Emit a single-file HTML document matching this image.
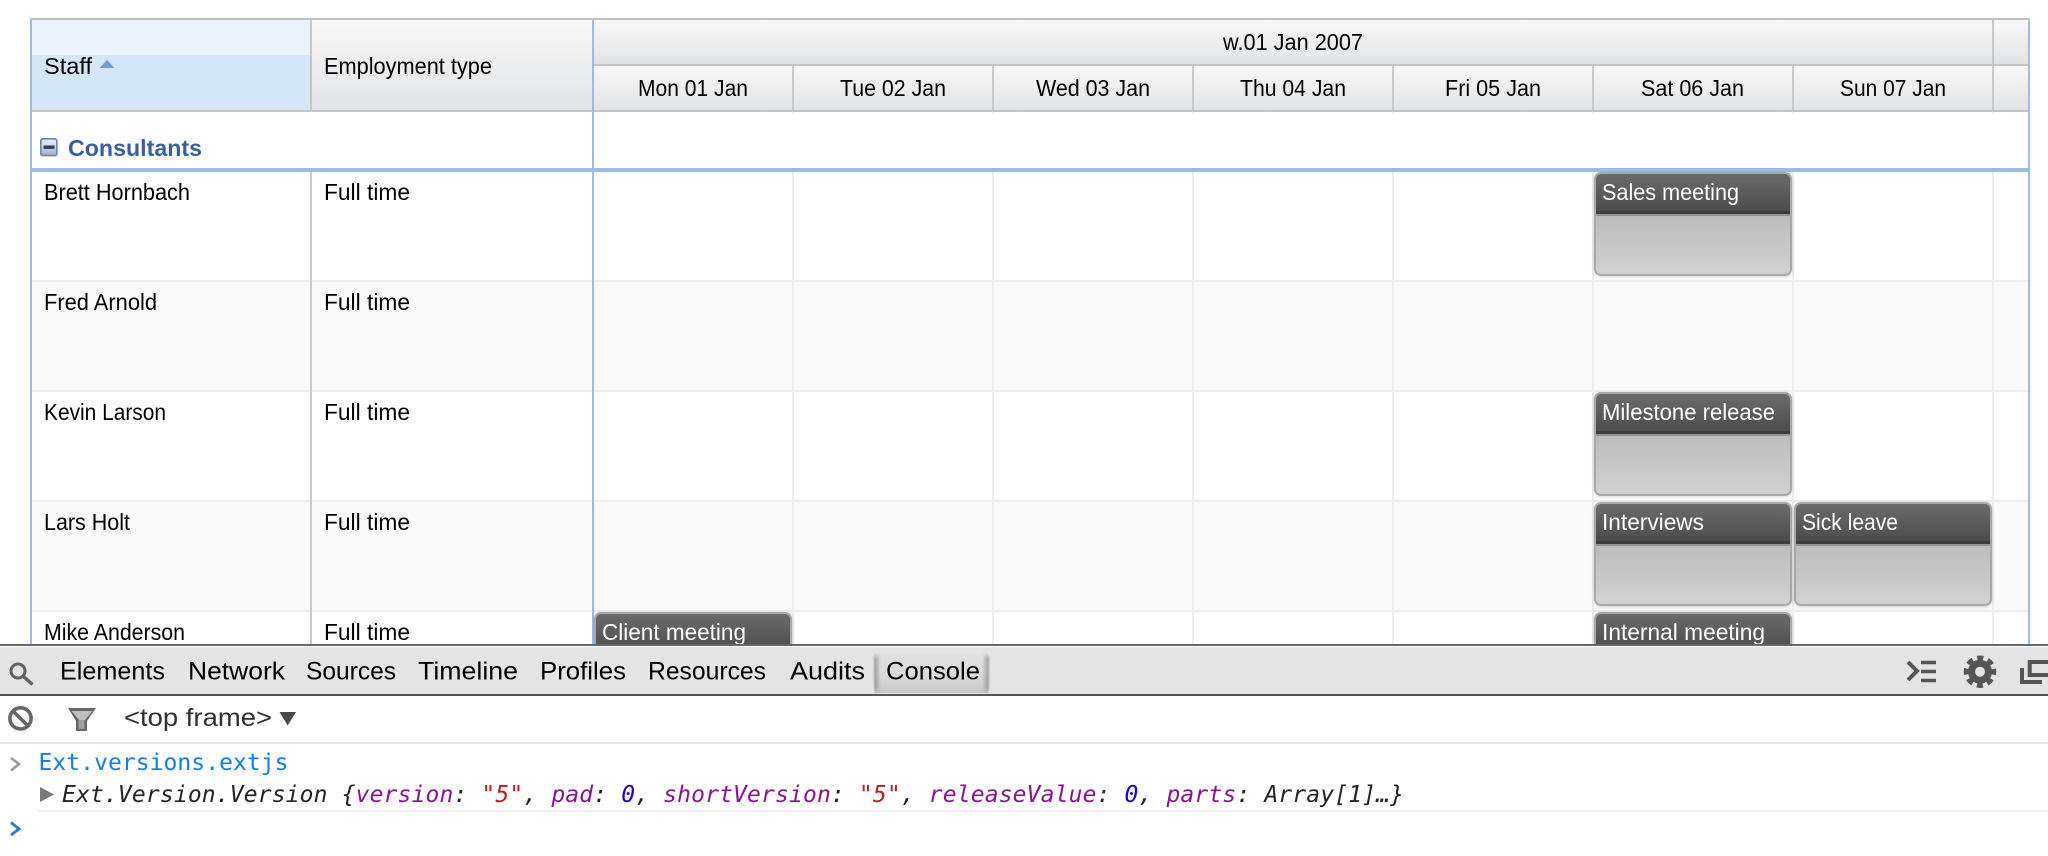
<!DOCTYPE html>
<html>
<head>
<meta charset="utf-8">
<title>Scheduler</title>
<style>
html,body{margin:0;padding:0;background:#fff;width:2048px;height:856px;overflow:hidden}
svg{display:block}
text{font-family:"Liberation Sans",sans-serif;font-size:23px;fill:#000}
.ev{fill:#fff;stroke:none}
.mono{font-family:"DejaVu Sans Mono","Liberation Mono",monospace;font-size:23px}
.tab{font-size:25px}
</style>
</head>
<body>
<svg width="2048" height="856" viewBox="0 0 2048 856" xmlns="http://www.w3.org/2000/svg">
<defs>
<linearGradient id="hd" x1="0" y1="0" x2="0" y2="1"><stop offset="0" stop-color="#f8f8f8"/><stop offset="1" stop-color="#e2e3e5"/></linearGradient>
<linearGradient id="evh" x1="0" y1="0" x2="0" y2="1"><stop offset="0" stop-color="#6b6b6b"/><stop offset="1" stop-color="#4a4a4a"/></linearGradient>
<linearGradient id="evb" x1="0" y1="0" x2="0" y2="1"><stop offset="0" stop-color="#adadad"/><stop offset="1" stop-color="#d2d2d2"/></linearGradient>
<linearGradient id="con" x1="0" y1="0" x2="0" y2="1"><stop offset="0" stop-color="#e2e2e2"/><stop offset=".55" stop-color="#dadada"/><stop offset="1" stop-color="#c8c8c8"/></linearGradient>
<linearGradient id="conl" x1="0" y1="0" x2="1" y2="0"><stop offset="0" stop-color="#8e8e8e" stop-opacity=".85"/><stop offset="1" stop-color="#8e8e8e" stop-opacity="0"/></linearGradient>
<linearGradient id="conr" x1="1" y1="0" x2="0" y2="0"><stop offset="0" stop-color="#8e8e8e" stop-opacity=".85"/><stop offset="1" stop-color="#8e8e8e" stop-opacity="0"/></linearGradient>
<linearGradient id="ico" x1="0" y1="0" x2="0" y2="1"><stop offset="0" stop-color="#eef2f8"/><stop offset="1" stop-color="#9fb0c8"/></linearGradient>
<filter id="sh" x="-5%" y="-5%" width="110%" height="112%"><feDropShadow dx="0" dy="1" stdDeviation="1.5" flood-color="#000" flood-opacity=".16"/></filter>
<filter id="soft" x="-50%" y="-10%" width="200%" height="120%"><feGaussianBlur stdDeviation="0.8 2"/></filter>
<g id="event">
<rect x="1" y="1" width="196" height="102" rx="6" fill="url(#evb)" stroke="#a8a8a8" stroke-width="2" filter="url(#sh)"/>
<path d="M2 42V7a5 5 0 0 1 5-5H191a5 5 0 0 1 5 5V42Z" fill="url(#evh)"/>
<rect x="2" y="39" width="194" height="3" fill="#3c3c3c"/>
<rect x="2" y="42" width="194" height="2" fill="#929292"/>
</g>
</defs>

<!-- grid rows -->
<rect x="32" y="112" width="1996" height="56" fill="#fff"/>
<rect x="32" y="172" width="1996" height="108" fill="#fff"/>
<rect x="32" y="282" width="1996" height="108" fill="#fafafa"/>
<rect x="32" y="392" width="1996" height="108" fill="#fff"/>
<rect x="32" y="502" width="1996" height="108" fill="#fafafa"/>
<rect x="32" y="612" width="1996" height="40" fill="#fff"/>
<g fill="#ededed">
<rect x="32" y="280" width="1996" height="2"/>
<rect x="32" y="390" width="1996" height="2"/>
<rect x="32" y="500" width="1996" height="2"/>
<rect x="32" y="610" width="1996" height="2"/>
<rect x="792" y="112" width="2" height="540"/>
<rect x="992" y="112" width="2" height="540"/>
<rect x="1192" y="112" width="2" height="540"/>
<rect x="1392" y="112" width="2" height="540"/>
<rect x="1592" y="112" width="2" height="540"/>
<rect x="1792" y="112" width="2" height="540"/>
<rect x="1992" y="112" width="2" height="540"/>
</g>
<!-- group row overlays vertical lines -->
<rect x="32" y="114" width="1996" height="54" fill="#fff"/>
<rect x="30" y="168" width="2000" height="4" fill="#9bbce8"/>
<rect x="310" y="172" width="2" height="480" fill="#cbcbcb"/>

<!-- header -->
<rect x="30" y="18" width="2000" height="2" fill="#c0c0c0"/>
<rect x="32" y="20" width="278" height="35" fill="#eaf2fc"/>
<rect x="32" y="55" width="278" height="55" fill="#d6e6f9"/>
<rect x="312" y="20" width="280" height="90" fill="url(#hd)"/>
<rect x="594" y="20" width="1434" height="44" fill="url(#hd)"/>
<rect x="594" y="66" width="1434" height="44" fill="url(#hd)"/>
<rect x="594" y="64" width="1434" height="2" fill="#c4c4c4"/>
<rect x="30" y="110" width="2000" height="2" fill="#c4c4c4"/>
<g fill="#c8c8c8">
<rect x="310" y="20" width="2" height="90"/>
<rect x="792" y="66" width="2" height="44"/>
<rect x="992" y="66" width="2" height="44"/>
<rect x="1192" y="66" width="2" height="44"/>
<rect x="1392" y="66" width="2" height="44"/>
<rect x="1592" y="66" width="2" height="44"/>
<rect x="1792" y="66" width="2" height="44"/>
<rect x="1992" y="66" width="2" height="44"/>
<rect x="1992" y="20" width="2" height="44"/>
</g>
<rect x="30" y="20" width="2" height="632" fill="#9bbce8"/>
<rect x="592" y="20" width="2" height="632" fill="#9bbce8"/>
<rect x="2028" y="20" width="2" height="632" fill="#9bbce8"/>

<!-- header text -->
<text x="44" y="74" textLength="48" lengthAdjust="spacingAndGlyphs">Staff</text>
<path d="M99.5 68L107 60L114.5 68Z" fill="#6f9bd6"/>
<text x="324" y="74" textLength="168" lengthAdjust="spacingAndGlyphs">Employment type</text>
<text x="1223" y="50" textLength="140" lengthAdjust="spacingAndGlyphs">w.01 Jan 2007</text>
<text x="638" y="96" textLength="110" lengthAdjust="spacingAndGlyphs">Mon 01 Jan</text>
<text x="840" y="96" textLength="106" lengthAdjust="spacingAndGlyphs">Tue 02 Jan</text>
<text x="1036" y="96" textLength="114" lengthAdjust="spacingAndGlyphs">Wed 03 Jan</text>
<text x="1240" y="96" textLength="106" lengthAdjust="spacingAndGlyphs">Thu 04 Jan</text>
<text x="1445" y="96" textLength="96" lengthAdjust="spacingAndGlyphs">Fri 05 Jan</text>
<text x="1641" y="96" textLength="103" lengthAdjust="spacingAndGlyphs">Sat 06 Jan</text>
<text x="1840" y="96" textLength="106" lengthAdjust="spacingAndGlyphs">Sun 07 Jan</text>

<!-- group -->
<rect x="40.8" y="138.8" width="16" height="16.8" rx="2" fill="url(#ico)" stroke="#6f84a8" stroke-width="1.6"/>
<rect x="43.5" y="145.5" width="11" height="3.4" fill="#27406b"/>
<text x="68" y="156" textLength="134" lengthAdjust="spacingAndGlyphs" style="fill:#3a5f9f;font-weight:bold">Consultants</text>

<!-- rows -->
<text x="44" y="200" textLength="146" lengthAdjust="spacingAndGlyphs">Brett Hornbach</text>
<text x="324" y="200" textLength="86" lengthAdjust="spacingAndGlyphs">Full time</text>
<text x="44" y="310" textLength="113" lengthAdjust="spacingAndGlyphs">Fred Arnold</text>
<text x="324" y="310" textLength="86" lengthAdjust="spacingAndGlyphs">Full time</text>
<text x="44" y="420" textLength="122" lengthAdjust="spacingAndGlyphs">Kevin Larson</text>
<text x="324" y="420" textLength="86" lengthAdjust="spacingAndGlyphs">Full time</text>
<text x="44" y="530" textLength="86" lengthAdjust="spacingAndGlyphs">Lars Holt</text>
<text x="324" y="530" textLength="86" lengthAdjust="spacingAndGlyphs">Full time</text>
<text x="44" y="640" textLength="141" lengthAdjust="spacingAndGlyphs">Mike Anderson</text>
<text x="324" y="640" textLength="86" lengthAdjust="spacingAndGlyphs">Full time</text>

<!-- events -->
<use href="#event" x="1594" y="172"/>
<use href="#event" x="1594" y="392"/>
<use href="#event" x="1594" y="502"/>
<use href="#event" x="1794" y="502"/>
<use href="#event" x="1594" y="612"/>
<use href="#event" x="594" y="612"/>
<text class="ev" x="1602" y="200" textLength="137" lengthAdjust="spacingAndGlyphs">Sales meeting</text>
<text class="ev" x="1602" y="420" textLength="173" lengthAdjust="spacingAndGlyphs">Milestone release</text>
<text class="ev" x="1602" y="530" textLength="102" lengthAdjust="spacingAndGlyphs">Interviews</text>
<text class="ev" x="1802" y="530" textLength="96" lengthAdjust="spacingAndGlyphs">Sick leave</text>
<text class="ev" x="1602" y="640" textLength="163" lengthAdjust="spacingAndGlyphs">Internal meeting</text>
<text class="ev" x="602" y="640" textLength="144" lengthAdjust="spacingAndGlyphs">Client meeting</text>

<!-- devtools -->
<rect x="0" y="644" width="2048" height="212" fill="#fff"/>
<rect x="0" y="644" width="2048" height="2" fill="#666"/>
<rect x="0" y="647" width="2048" height="47" fill="#e4e4e4"/>
<rect x="0" y="694" width="2048" height="2" fill="#555"/>

<!-- search icon -->
<circle cx="18" cy="671" r="7" fill="none" stroke="#606060" stroke-width="3"/>
<path d="M23.5 676.5L32.5 684.5" stroke="#606060" stroke-width="3.4" fill="none"/>

<!-- console tab highlight -->
<rect x="875" y="653" width="113" height="40" fill="url(#con)"/>
<rect x="874" y="656" width="7" height="35" fill="url(#conl)" filter="url(#soft)"/>
<rect x="982" y="656" width="7" height="35" fill="url(#conr)" filter="url(#soft)"/>

<text class="tab" x="60" y="679.5" textLength="105" lengthAdjust="spacingAndGlyphs">Elements</text>
<text class="tab" x="188" y="679.5" textLength="97" lengthAdjust="spacingAndGlyphs">Network</text>
<text class="tab" x="306" y="679.5" textLength="90" lengthAdjust="spacingAndGlyphs">Sources</text>
<text class="tab" x="418" y="679.5" textLength="100" lengthAdjust="spacingAndGlyphs">Timeline</text>
<text class="tab" x="540" y="679.5" textLength="86" lengthAdjust="spacingAndGlyphs">Profiles</text>
<text class="tab" x="648" y="679.5" textLength="118" lengthAdjust="spacingAndGlyphs">Resources</text>
<text class="tab" x="790" y="679.5" textLength="75" lengthAdjust="spacingAndGlyphs">Audits</text>
<text class="tab" x="886" y="679.5" textLength="94" lengthAdjust="spacingAndGlyphs">Console</text>

<!-- right icons -->
<path d="M1908 662L1917 671L1908 680" fill="none" stroke="#555" stroke-width="4"/>
<path d="M1921 662.5H1936M1921 671.5H1936M1921 680.5H1936" fill="none" stroke="#555" stroke-width="3.4"/>
<circle cx="1980" cy="671.7" r="8.5" fill="none" stroke="#555" stroke-width="7"/>
<circle cx="1980" cy="671.7" r="13.5" fill="none" stroke="#555" stroke-width="5.5" stroke-dasharray="6 4.6" stroke-dashoffset="3"/>
<path d="M2022 668V682H2042" fill="none" stroke="#555" stroke-width="4"/>
<rect x="2029.7" y="662" width="30" height="13" fill="none" stroke="#555" stroke-width="4"/>

<!-- filter bar -->
<circle cx="20.5" cy="718.4" r="10.6" fill="none" stroke="#666" stroke-width="3.6"/>
<path d="M13 711L28 726" stroke="#666" stroke-width="3.6"/>
<path d="M68 708H96L87 721V731H76V721Z" fill="#666"/>
<path d="M71.5 711H92.5L85 720H79Z" fill="#bdbdbd"/>
<rect x="78.5" y="720" width="6" height="9" fill="#a0a0a0"/>
<text x="124" y="726" textLength="148" lengthAdjust="spacingAndGlyphs" style="font-size:25px;fill:#303030">&lt;top frame&gt;</text>
<path d="M279.5 712H296L287.7 725.5Z" fill="#4a4a4a"/>
<rect x="0" y="742" width="2048" height="2" fill="#e6e6e6"/>

<!-- console -->
<path d="M11 758L19 764L11 770.5" fill="none" stroke="#9a9a9a" stroke-width="2.6"/>
<text class="mono" x="38.5" y="770" textLength="250" style="fill:#0f7cf5" xml:space="preserve">Ext.versions.extjs</text>
<path d="M40 787L54 794.5L40 802Z" fill="#787878"/>
<text class="mono" x="62" y="802" textLength="1342" style="font-style:italic;fill:#222" xml:space="preserve">Ext.Version.Version {<tspan style="fill:#881391">version</tspan>: <tspan style="fill:#c41a16">"5"</tspan>, <tspan style="fill:#881391">pad</tspan>: <tspan style="fill:#1c00cf">0</tspan>, <tspan style="fill:#881391">shortVersion</tspan>: <tspan style="fill:#c41a16">"5"</tspan>, <tspan style="fill:#881391">releaseValue</tspan>: <tspan style="fill:#1c00cf">0</tspan>, <tspan style="fill:#881391">parts</tspan>: Array[1]…}</text>
<rect x="38" y="810" width="2010" height="2" fill="#f0f0f0"/>
<path d="M11 822.5L19 829L11 835" fill="none" stroke="#2a73e8" stroke-width="2.8"/>
</svg>
</body>
</html>
